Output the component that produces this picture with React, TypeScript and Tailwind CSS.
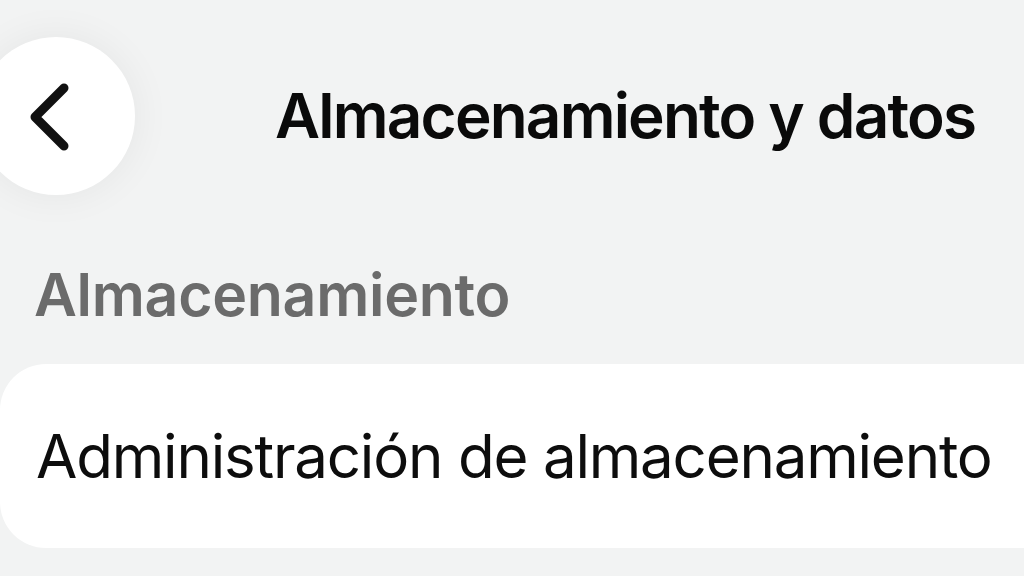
import React from 'react';

function BackButton() {
  return (
    <button className="ml-[-23px] flex h-[158px] w-[158px] shrink-0 items-center justify-center rounded-full bg-white shadow-[0_0_40px_rgba(0,0,0,0.06)]">
      <svg width="48" height="72" viewBox="0 0 48 72" className="ml-[-8px] mt-[2px]" fill="none">
        <path d="M36 7 L7 36 L36 65" stroke="#111" strokeWidth="9" strokeLinecap="round" strokeLinejoin="round" />
      </svg>
    </button>
  );
}

export default function App() {
  return (
    <div className="h-[576px] w-[1024px] overflow-hidden bg-[#f2f3f3] font-['Inter','Noto_Sans',sans-serif]">
      {/* Top bar */}
      <header className="flex items-center pt-[37px]">
        <BackButton />
        <h1 className="ml-[140px] text-[62px] font-semibold leading-none tracking-[-1.8px] text-[#0a0a0a]">
          Almacenamiento y datos
        </h1>
      </header>

      {/* Section */}
      <section className="mt-[70px]">
        <h2 className="pl-[34px] text-[59px] font-semibold leading-none tracking-[-0.3px] text-[#6b6b6b]">
          Almacenamiento
        </h2>
        <div className="mt-[40px] flex h-[184px] w-[1070px] items-center rounded-[46px] bg-white pl-[36px]">
          <span className="text-[60px] font-normal leading-none tracking-[-1.2px] text-[#0d0d0d]">
            Administración de almacenamiento
          </span>
        </div>
      </section>
    </div>
  );
}
